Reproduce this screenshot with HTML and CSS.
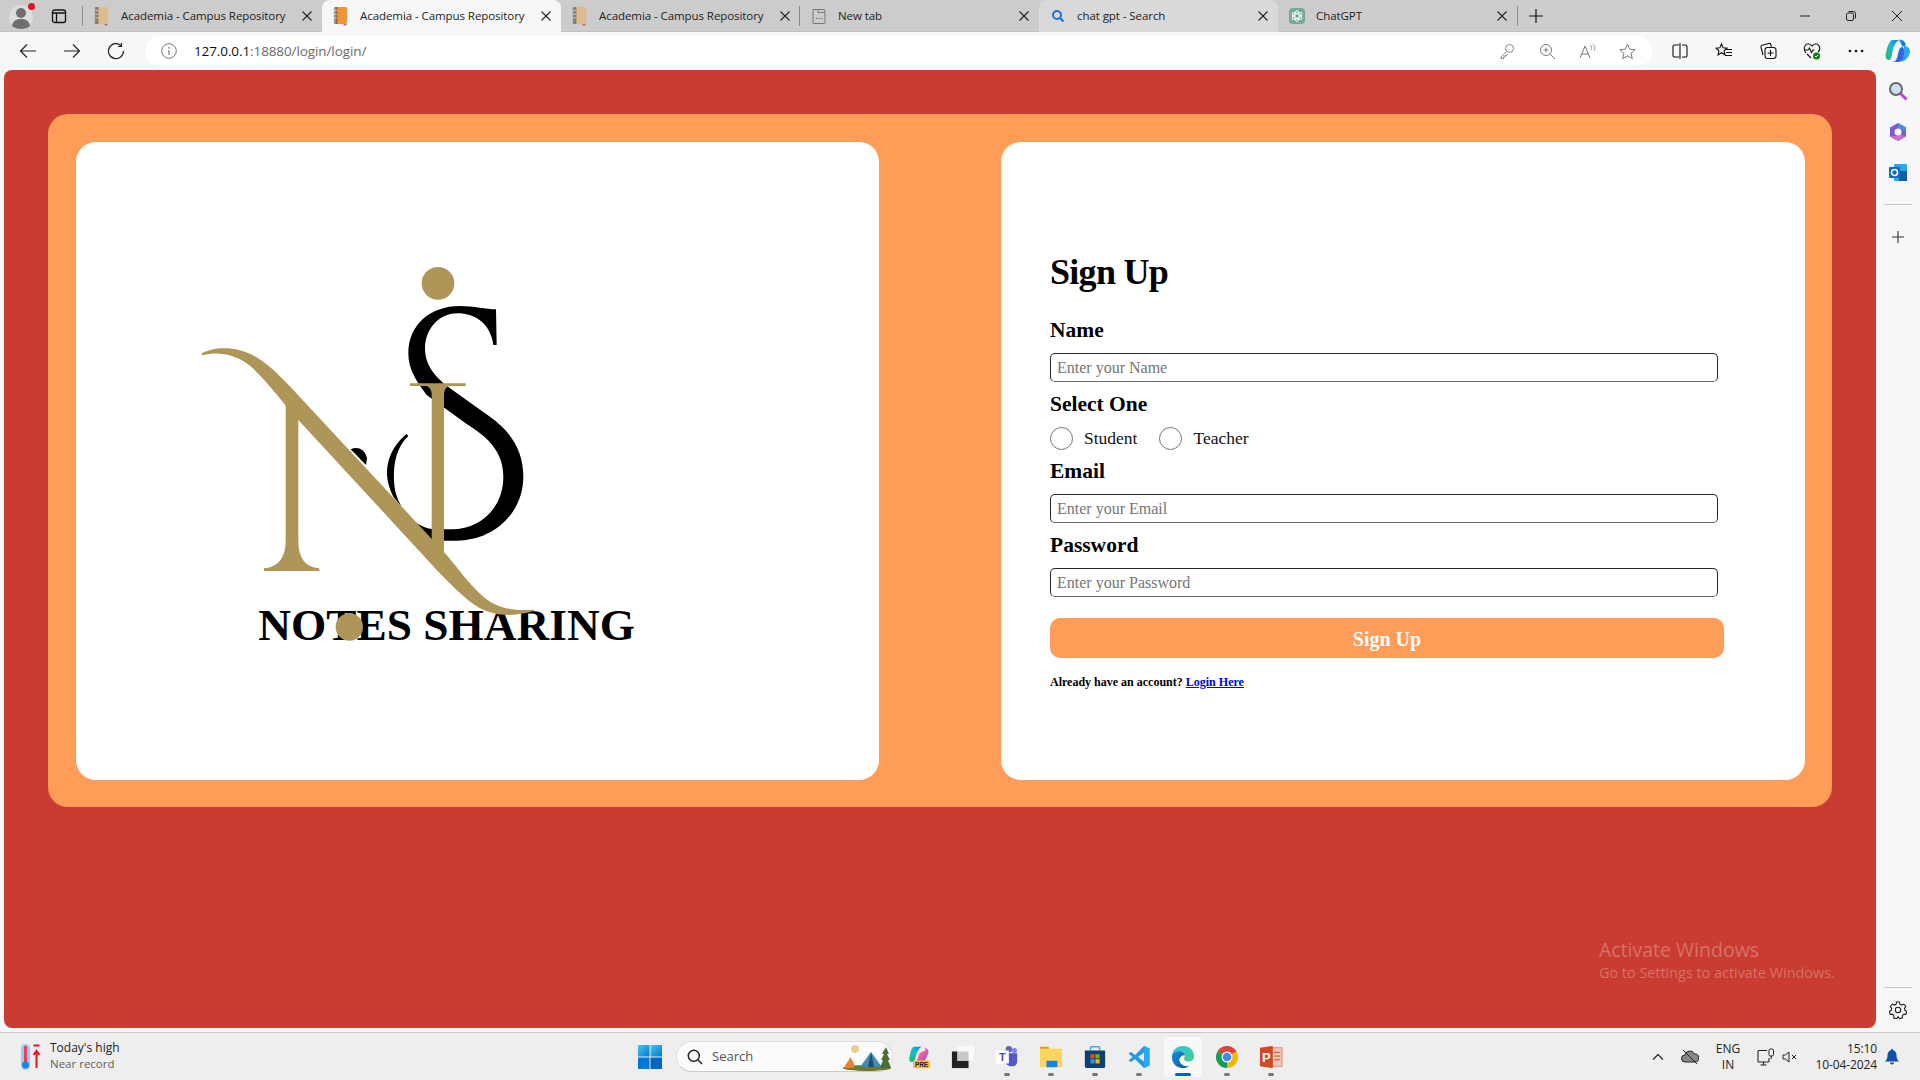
FILE: index.html
```html
<!DOCTYPE html>
<html lang="en">
<head>
<meta charset="utf-8">
<title>Academia - Campus Repository</title>
<link rel="stylesheet" href="styles.css">
</head>
<body>
<svg class="defs" width="0" height="0" aria-hidden="true">
  <defs>
    <symbol id="book" viewBox="0 0 20 22">
      <path d="M4 1h11a2 2 0 0 1 2 2v15a2 2 0 0 1-2 2H4z" fill="currentColor"/>
      <path d="M3 1h3v19H3a1 1 0 0 1-1-1V2a1 1 0 0 1 1-1z" fill="#000" opacity=".35"/>
      <path d="M2.500 5h3M2.500 9h3M2.500 13h3" stroke="#fff" stroke-width="1" opacity=".7"/>
      <path d="M13 20v2l1.500-1 1.500 1v-2z" fill="#b0452a" opacity=".8"/>
    </symbol>
    <symbol id="close" viewBox="0 0 16 16">
      <path d="M3.500 3.500l9 9M12.500 3.500l-9 9" stroke="#222" stroke-width="1.100" fill="none"/>
    </symbol>
    <linearGradient id="cop1" x1="0" y1="0" x2="1" y2="1">
      <stop offset="0" stop-color="#1fc2e8"/><stop offset=".55" stop-color="#1a73e0"/><stop offset="1" stop-color="#7a3ee0"/>
    </linearGradient>
    <linearGradient id="cop2" x1="0" y1="1" x2="1" y2="0">
      <stop offset="0" stop-color="#2bb673"/><stop offset=".6" stop-color="#19b8d8"/><stop offset="1" stop-color="#1a73e0"/>
    </linearGradient>
    <linearGradient id="cop3" x1="0" y1="0" x2="1" y2="1">
      <stop offset="0" stop-color="#f4b942"/><stop offset=".5" stop-color="#e85db0"/><stop offset="1" stop-color="#8a4fe0"/>
    </linearGradient>
    <linearGradient id="edge1" x1="0" y1="0" x2="1" y2="1">
      <stop offset="0" stop-color="#33c0e8"/><stop offset="1" stop-color="#46d08a"/>
    </linearGradient>
    <linearGradient id="edge2" x1="0" y1="0" x2="1" y2="1">
      <stop offset="0" stop-color="#1a8fe0"/><stop offset="1" stop-color="#0b4f9e"/>
    </linearGradient>
    <linearGradient id="winl" x1="0" y1="0" x2="1" y2="1">
      <stop offset="0" stop-color="#4cc4f5"/><stop offset="1" stop-color="#0078d4"/>
    </linearGradient>
  </defs>
</svg>

<header class="tabstrip">
  <div class="strip-start">
    <span class="strip-profile">
      <svg width="30" height="30" viewBox="0 0 30 30"><circle cx="14" cy="16" r="12" fill="#dcdcdc"/><circle cx="14" cy="12" r="5" fill="#6e6e6e"/><path d="M5 25c1-6 5-7 9-7s8 1 9 7c-2 2-6 3-9 3s-7-1-9-3z" fill="#6e6e6e"/><circle cx="24.500" cy="5.500" r="3.500" fill="#e81123"/></svg>
    </span>
    <span class="strip-panes">
      <svg width="16" height="16" viewBox="0 0 16 16"><rect x="1.500" y="2" width="13" height="12.500" rx="2" fill="none" stroke="#111" stroke-width="1.300"/><path d="M1.500 5h13M5.500 5v9.500" stroke="#111" stroke-width="1.300"/></svg>
    </span>
    <span class="strip-sep"></span>
  </div>
  <div class="tab"><svg class="tab-fav fav-faded" width="18" height="20"><use href="#book"/></svg><span class="tab-title">Academia - Campus Repository</span><svg class="tab-x" width="16" height="16"><use href="#close"/></svg></div>
  <div class="tab tab-active"><svg class="tab-fav fav-strong" width="18" height="20"><use href="#book"/></svg><span class="tab-title">Academia - Campus Repository</span><svg class="tab-x" width="16" height="16"><use href="#close"/></svg></div>
  <div class="tab tab-divided"><svg class="tab-fav fav-faded" width="18" height="20"><use href="#book"/></svg><span class="tab-title">Academia - Campus Repository</span><svg class="tab-x" width="16" height="16"><use href="#close"/></svg></div>
  <div class="tab tab-divided"><svg class="tab-fav" width="18" height="20" viewBox="0 0 18 20"><path d="M3 3.500h5v3h7v10a1 1 0 0 1-1 1H4a1 1 0 0 1-1-1zM8 3.500h6a1 1 0 0 1 1 1v2" fill="none" stroke="#777" stroke-width="1"/><path d="M5.800 12.500h1.200M8.400 12.500h1.200M11 12.500h1.200" stroke="#666" stroke-width="1.200"/></svg><span class="tab-title">New tab</span><svg class="tab-x" width="16" height="16"><use href="#close"/></svg></div>
  <div class="tab tab-hover"><svg class="tab-fav" width="18" height="20" viewBox="0 0 18 20"><circle cx="8" cy="9" r="4" fill="none" stroke="#1a73d8" stroke-width="2"/><path d="M11 12l3.500 3.500" stroke="#1a73d8" stroke-width="2.200"/></svg><span class="tab-title">chat gpt - Search</span><svg class="tab-x" width="16" height="16"><use href="#close"/></svg></div>
  <div class="tab"><svg class="tab-fav" width="18" height="20" viewBox="0 0 18 20"><rect x="1" y="2" width="16" height="16" rx="4" fill="#74aa9c"/><g fill="none" stroke="#fff" stroke-width=".9"><ellipse cx="9" cy="10" rx="2.300" ry="5.500"/><ellipse cx="9" cy="10" rx="2.300" ry="5.500" transform="rotate(60 9 10)"/><ellipse cx="9" cy="10" rx="2.300" ry="5.500" transform="rotate(120 9 10)"/></g></svg><span class="tab-title">ChatGPT</span><svg class="tab-x" width="16" height="16"><use href="#close"/></svg></div>
  <span class="strip-sep"></span>
  <span class="strip-new"><svg width="16" height="16" viewBox="0 0 16 16"><path d="M8 1v14M1 8h14" stroke="#111" stroke-width="1.200"/></svg></span>
  <div class="win-controls">
    <span class="win-btn"><svg width="12" height="12" viewBox="0 0 12 12"><path d="M1 6h10" stroke="#222" stroke-width="1"/></svg></span>
    <span class="win-btn"><svg width="12" height="12" viewBox="0 0 12 12"><rect x="1.500" y="3" width="7" height="7.500" rx="1.500" fill="none" stroke="#222"/><path d="M3.500 1.500h5a2 2 0 0 1 2 2v5" fill="none" stroke="#222"/></svg></span>
    <span class="win-btn"><svg width="12" height="12" viewBox="0 0 12 12"><path d="M1 1l10 10M11 1L1 11" stroke="#222" stroke-width="1"/></svg></span>
  </div>
</header>

<nav class="toolbar">
  <span class="tool"><svg width="18" height="18" viewBox="0 0 18 18"><path d="M17 9H1.500M8 2.500L1.500 9 8 15.500" fill="none" stroke="#222" stroke-width="1.200"/></svg></span>
  <span class="tool"><svg width="18" height="18" viewBox="0 0 18 18"><path d="M1 9h15.500M10 2.500L16.500 9 10 15.500" fill="none" stroke="#222" stroke-width="1.200"/></svg></span>
  <span class="tool"><svg width="18" height="18" viewBox="0 0 18 18"><path d="M14 3.500A7.500 7.500 0 1 0 16.500 9" fill="none" stroke="#222" stroke-width="1.200"/><path d="M14.500 1v3.500H11" fill="none" stroke="#222" stroke-width="1.200"/></svg></span>
  <div class="addressbar">
    <svg width="16" height="16" viewBox="0 0 16 16"><circle cx="8" cy="8" r="7.300" fill="none" stroke="#777"/><path d="M8 7v5" stroke="#777" stroke-width="1.200"/><circle cx="8" cy="4.800" r=".9" fill="#777"/></svg>
    <span class="url"><span class="url-host">127.0.0.1</span>:18880/login/login/</span>
    <span class="addr-tools">
      <span class="addr-tool"><svg width="16" height="16" viewBox="0 0 16 16"><circle cx="10.500" cy="5.500" r="4" fill="none" stroke="#888"/><path d="M7.500 8.500L2 14v1.500h2.500V14H6v-1.500h1.500l1-1.500" fill="none" stroke="#888"/></svg></span>
      <span class="addr-tool"><svg width="17" height="17" viewBox="0 0 17 17"><circle cx="7" cy="7" r="5.500" fill="none" stroke="#777"/><path d="M11 11l5 5M7 4.500v5M4.500 7h5" stroke="#777"/></svg></span>
      <span class="addr-tool"><svg width="17" height="17" viewBox="0 0 17 17"><path d="M1 15L6 3l5 12M3 11h6" fill="none" stroke="#777"/><path d="M11 2c2 1 2 3 1 5M13.500 1c3 1.500 3 4.500 1.500 7" fill="none" stroke="#999"/></svg></span>
      <span class="addr-tool"><svg width="17" height="17" viewBox="0 0 17 17"><path d="M8.500 1.200l2.200 5 5.400.5-4.100 3.600 1.300 5.300-4.800-2.800-4.800 2.800 1.300-5.300L.9 6.700l5.400-.5z" fill="none" stroke="#777"/></svg></span>
    </span>
  </div>
  <div class="tool-group">
    <span class="tool"><svg width="16" height="16" viewBox="0 0 16 16"><path d="M7 2H2.500a1.500 1.500 0 0 0-1.500 1.500v9A1.500 1.500 0 0 0 2.500 14H7M10 2h3.500A1.500 1.500 0 0 1 15 3.500v9a1.500 1.500 0 0 1-1.500 1.500H10M8 0v16" fill="none" stroke="#111" stroke-width="1.100"/></svg></span>
    <span class="tool"><svg width="18" height="18" viewBox="0 0 18 18"><path d="M6.500 2l1.600 3.700 4 .4-3 2.700.9 4L6.500 10.700 3 12.800l.9-4-3-2.700 4-.4z" fill="none" stroke="#111" stroke-width="1.100"/><path d="M11 7.500h6M11 10.500h6M10 13.500h7" stroke="#111" stroke-width="1.100"/></svg></span>
    <span class="tool"><svg width="18" height="18" viewBox="0 0 18 18"><rect x="6" y="5.500" width="11" height="11" rx="2.500" fill="none" stroke="#111" stroke-width="1.100"/><path d="M11.500 8v6M8.500 11h6M4 13l-2-8a1.500 1.500 0 0 1 1-1.800l7-1.700a1.500 1.500 0 0 1 1.800 1l.5 2.500" fill="none" stroke="#111" stroke-width="1.100"/></svg></span>
    <span class="tool"><svg width="18" height="18" viewBox="0 0 18 18"><path d="M3 11C-1 6 3 1 6 2c1.500.3 2.500 1.500 3 2 .5-.5 1.500-1.700 3-2 3-1 7 4 3 8" fill="none" stroke="#111" stroke-width="1.100"/><path d="M1 8h4l1.500-2 2 4.500 1.500-2.500h1.500M4 12l4 4" fill="none" stroke="#111" stroke-width="1.100"/><circle cx="13.500" cy="14" r="3.500" fill="#107c10"/><path d="M12 14l1 1 2-2" fill="none" stroke="#fff"/></svg></span>
    <span class="tool"><svg width="16" height="4" viewBox="0 0 16 4"><circle cx="2" cy="2" r="1.300" fill="#111"/><circle cx="8" cy="2" r="1.300" fill="#111"/><circle cx="14" cy="2" r="1.300" fill="#111"/></svg></span>
    <span class="tool tool-copilot"><svg width="26" height="24" viewBox="0 0 26 24"><path d="M8 1h6c-4 2-6 8-7 14-.5 3-1 6-3 6-3 0-4-3-3-7C2 9 4 1 8 1z" fill="url(#cop2)"/><path d="M14 1c4-1 6 2 7 5l-6 3c-2 3-2 9-4 12-1 2-3 2-6 2h8c5 0 7-6 8-9z" fill="url(#cop1)"/><path d="M19 7c3 0 6 2 6 5s-3 10-9 11c3-3 3-10 3-16z" fill="#28a8ea"/></svg></span>
  </div>
</nav>

<div class="workspace">
  <main class="page">
    <section class="card">
      <div class="panel panel-logo">
        <svg class="logo" width="480" height="410" viewBox="0 0 1440 1230" role="img" aria-label="Notes Sharing logo">
          <text class="logo-text" x="235" y="1169" textLength="1130" lengthAdjust="spacingAndGlyphs">NOTES SHARING</text>
          <g fill="#000">
            <path d="M948 178L950 285L940 285C935 240 905 195 840 190C775 186 735 240 735 295C735 350 770 385 810 415L930 500C1000 550 1030 610 1030 680C1030 790 940 872 830 872L780 872L780 838L815 838C905 838 970 770 970 680C970 610 930 565 860 522L740 435C710 395 685 360 685 310C685 225 750 168 840 168C880 168 920 178 948 178Z"/>
            <path d="M685 558C650 590 640 640 642 690C643 720 650 745 665 770L640 740C625 710 618 680 622 650C628 610 650 575 680 552Z"/>
            <path d="M690 805C720 830 745 840 790 840L790 872L750 868Z"/>
            <path d="M512 598C530 588 555 595 561 625L558 645Z"/>
          </g>
          <g fill="#ae9558">
            <path d="M690 400H857V408H810C798 410 792 420 792 435V930H755V435C755 420 749 410 737 408H690Z"/>
            <path d="M317 450H355V870C355 925 375 950 418 955V963H252V955C295 950 317 925 317 870Z"/>
            <path d="M65 310C100 290 170 285 230 322C270 347 300 378 340 420L800 915C850 975 880 1020 930 1055C970 1080 1020 1082 1062 1079V1083C1000 1099 950 1102 895 1072C855 1047 815 1005 775 965L355 510C300 448 260 392 210 347C170 314 115 302 67 316Z"/>
            <circle cx="774" cy="100" r="49"/>
            <circle cx="508" cy="1131" r="41"/>
          </g>
        </svg>
      </div>
      <div class="panel panel-form">
        <form class="signup">
          <h1 class="signup-title">Sign Up</h1>
          <label class="field-label field-first" for="name">Name</label>
          <input class="field-input" id="name" type="text" placeholder="Enter your Name">
          <div class="field-label">Select One</div>
          <div class="radio-row">
            <label class="radio-item"><input class="radio" type="radio" name="role">Student</label>
            <label class="radio-item"><input class="radio" type="radio" name="role">Teacher</label>
          </div>
          <label class="field-label field-tight" for="email">Email</label>
          <input class="field-input" id="email" type="email" placeholder="Enter your Email">
          <label class="field-label" for="password">Password</label>
          <input class="field-input" id="password" type="password" placeholder="Enter your Password">
          <button class="submit" type="button">Sign Up</button>
          <p class="signup-note">Already have an account? <a href="#">Login Here</a></p>
        </form>
      </div>
    </section>
    <div class="watermark">
      <div class="wm-title">Activate Windows</div>
      <div class="wm-sub">Go to Settings to activate Windows.</div>
    </div>
  </main>
  <aside class="sidebar">
    <span class="side-icon"><svg width="20" height="20" viewBox="0 0 20 20"><circle cx="8" cy="8" r="6" fill="#cfe0ee" stroke="#666" stroke-width="2"/><path d="M12.500 12.500l6 6" stroke="#c23fe0" stroke-width="3"/></svg></span>
    <span class="side-icon"><svg width="20" height="20" viewBox="0 0 20 20"><path d="M10 1l8 4.500v9L10 19l-8-4.500v-9z" fill="#7a5bd0"/><path d="M10 1l8 4.500v4L10 6z" fill="#4a90e0"/><path d="M2 14.500l8 4.500 8-4.500-5-2-3 1z" fill="#c86fd0"/><circle cx="10" cy="10" r="3.500" fill="#f7f7f7"/></svg></span>
    <span class="side-icon"><svg width="20" height="20" viewBox="0 0 20 20"><rect x="6" y="1" width="13" height="17" rx="1" fill="#28a8ea"/><rect x="11" y="8" width="8" height="10" fill="#0a5ea8"/><rect x="1" y="4" width="11" height="11" rx="1" fill="#0f6cbd"/><circle cx="6.500" cy="9.500" r="3" fill="none" stroke="#fff" stroke-width="1.500"/></svg></span>
    <span class="side-rule"></span>
    <span class="side-icon side-plus"><svg width="14" height="14" viewBox="0 0 14 14"><path d="M7 1v12M1 7h12" stroke="#333" stroke-width="1.100"/></svg></span>
    <span class="side-rule side-rule-low"></span>
    <span class="side-icon side-gear"><svg width="18" height="18" viewBox="0 0 18 18"><path d="M7.500 1h3l.5 2.300 1.700.8 2.100-1 2 2.400-1.300 1.900.4 1.900 1.900 1.200-.9 2.900-2.300-.1-1.300 1.400.1 2.200-2.900.9-1.200-1.900H8.900l-1.300 1.900-2.900-.9.200-2.300-1.300-1.300-2.300.1-.9-2.900 1.900-1.200.4-1.900L1.400 5.500l2-2.400 2.100 1L7.100 3.300z" fill="none" stroke="#222" stroke-width="1.100"/><circle cx="9" cy="9" r="2.700" fill="none" stroke="#222" stroke-width="1.100"/></svg></span>
  </aside>
</div>

<footer class="taskbar">
  <div class="tb-weather">
    <svg width="24" height="30" viewBox="0 0 24 30"><rect x="3" y="2" width="9" height="26" rx="4.500" fill="#9cc9f2"/><rect x="6" y="4" width="3" height="16" fill="#e0455f"/><circle cx="7.500" cy="23" r="3.500" fill="#1a86d8"/><path d="M15.500 3.500h6" stroke="#e81123" stroke-width="2"/><path d="M18.500 26V10M15.500 13l3-4 3 4" fill="none" stroke="#e81123" stroke-width="2"/></svg>
    <div class="weather-text">
      <div class="weather-main">Today's high</div>
      <div class="weather-sub">Near record</div>
    </div>
  </div>
  <span class="tb-start"><svg width="24" height="24" viewBox="0 0 24 24"><rect x="0" y="0" width="11.500" height="11.500" fill="url(#winl)"/><rect x="12.500" y="0" width="11.500" height="11.500" fill="url(#winl)"/><rect x="0" y="12.500" width="11.500" height="11.500" fill="#0078d4"/><rect x="12.500" y="12.500" width="11.500" height="11.500" fill="#0067c0"/></svg></span>
  <div class="tb-search">
    <svg width="16" height="16" viewBox="0 0 16 16"><circle cx="6.800" cy="6.800" r="5.500" fill="none" stroke="#222" stroke-width="1.500"/><path d="M10.800 10.800L15 15" stroke="#222" stroke-width="1.500"/></svg>
    <span class="tb-search-text">Search</span>
    <svg class="tb-camp" width="50" height="28" viewBox="0 0 50 28"><ellipse cx="25" cy="25" rx="24" ry="3" fill="#6d7a2e"/><path d="M18 24l11-15 11 15z" fill="#3f8cb5"/><path d="M29 9l-3 15h6z" fill="#1f4f6d"/><circle cx="13" cy="6" r="4" fill="#eecb9a"/><path d="M3 25c0-5 4-6 5-11 2 3 5 6 4 11z" fill="#ee7f2a"/><path d="M44 4l-4 7h2l-3 6h2l-3 8h11l-3-8h2l-3-6h2z" fill="#4f6b35"/></svg>
  </div>
  <span class="tb-slot"><svg width="26" height="28" viewBox="0 0 26 28"><path d="M7 2h9c-4 2-6 8-7 13-.5 3-2 5-4 5-3 0-4-3-3-6C3 9 4 3 7 2z" fill="url(#cop2)"/><path d="M14 2c3-1 6 1 7 4l-7 3c-2 3-2 8-5 11h9c3-3 5-8 6-11 1-4-4-7-10-7z" fill="url(#cop3)"/><rect x="6" y="18" width="20" height="9" rx="2" fill="#fbbf17"/><text class="pre-text" x="16" y="25.500" text-anchor="middle">PRE</text></svg></span>
  <span class="tb-slot"><svg width="26" height="26" viewBox="0 0 26 26"><rect x="1" y="7" width="18" height="18" fill="#222"/><rect x="7" y="1" width="18" height="16" fill="#fafafa"/><rect x="7" y="7" width="12" height="10" fill="#c8c8c8"/></svg></span>
  <span class="tb-slot"><svg width="26" height="26" viewBox="0 0 26 26"><circle cx="21" cy="6" r="2.800" fill="#7b83eb"/><circle cx="15" cy="4.500" r="3.500" fill="#6264a7"/><path d="M11 9h13v9a5 5 0 0 1-5 5h-2a6 6 0 0 1-6-6z" fill="#5059c9"/><rect x="1" y="6" width="14" height="14" fill="#fff"/><text class="teams-text" x="8" y="17.500" text-anchor="middle">T</text></svg><span class="run-dot"></span></span>
  <span class="tb-slot"><svg width="26" height="26" viewBox="0 0 26 26"><path d="M1 3a1 1 0 0 1 1-1h8l2 2.500H1z" fill="#d9a21e"/><rect x="1" y="4" width="24" height="20" rx="1" fill="#fdd55f"/><rect x="8" y="17" width="12" height="7" rx="1" fill="#1a86d8"/></svg><span class="run-dot"></span></span>
  <span class="tb-slot"><svg width="24" height="26" viewBox="0 0 24 26"><path d="M7 6V3a1 1 0 0 1 1-1h8a1 1 0 0 1 1 1v3" fill="none" stroke="#28b8e8" stroke-width="1.600"/><path d="M1 6h22v17a2 2 0 0 1-2 2H3a2 2 0 0 1-2-2z" fill="#0f3f73"/><rect x="7" y="10" width="4.500" height="4.500" fill="#e8491d"/><rect x="12.500" y="10" width="4.500" height="4.500" fill="#7ab800"/><rect x="7" y="15.500" width="4.500" height="4.500" fill="#1a9cf0"/><rect x="12.500" y="15.500" width="4.500" height="4.500" fill="#fdb900"/></svg><span class="run-dot"></span></span>
  <span class="tb-slot"><svg width="26" height="26" viewBox="0 0 24 24"><path d="M17 1L8 10 4 7 1.500 8.500 5.500 12l-4 3.500L4 17l4-3 9 9 5.500-2.500v-17zM17 7.500v9L11 12z" fill="#1f9be8" fill-rule="evenodd"/><path d="M17 1l5.500 2.500v17L17 23z" fill="#29aaf0"/></svg><span class="run-dot"></span></span>
  <span class="tb-slot tb-slot-active"><svg width="26" height="26" viewBox="0 0 26 26"><path d="M1 13C1 6 6 1 13 1c7 0 12 5 12 11 0 4-3 6-6 6-3 0-5-1-5-3 0-1 1-1.500 1-3 0-2-3-4-6-4C5 8 1 10 1 13z" fill="url(#edge1)"/><path d="M1 13c0-4 4-6 8-6 3 0 6 2 6 4-3 0-6 2-6 5 0 4 4 7 8 7 1 0 2 0 3-.5C18 24 15 25 13 25 6 25 1 20 1 13z" fill="url(#edge2)"/></svg><span class="run-bar"></span></span>
  <span class="tb-slot"><svg width="26" height="26" viewBox="0 0 24 24"><path d="M12 12L2.470 6.500A11 11 0 0 1 21.530 6.500Z" fill="#db4437"/><path d="M12 12L21.530 6.500A11 11 0 0 1 12 23Z" fill="#f4b400"/><path d="M12 12L12 23A11 11 0 0 1 2.470 6.500Z" fill="#0f9d58"/><circle cx="12" cy="12" r="5.500" fill="#fff"/><circle cx="12" cy="12" r="4.300" fill="#4285f4"/></svg><span class="run-dot"></span></span>
  <span class="tb-slot"><svg width="26" height="26" viewBox="0 0 26 26"><rect x="13" y="3" width="12" height="20" fill="#f0c8b8" stroke="#d88a70"/><path d="M16 8h7M16 12h7M16 16h7" stroke="#d24726"/><path d="M1 3l14-2v24L1 23z" fill="#d24726"/><text class="ppt-text" x="8" y="18" text-anchor="middle">P</text></svg><span class="run-dot"></span></span>
  <div class="tray">
    <svg class="tray-chev" width="12" height="8" viewBox="0 0 12 8"><path d="M1 6.500L6 1.500l5 5" fill="none" stroke="#222" stroke-width="1.200"/></svg>
    <svg class="tray-cloud" width="18" height="16" viewBox="0 0 18 16"><path d="M4 13a3.500 3.500 0 0 1 0-7 5 5 0 0 1 9.500-1A4 4 0 0 1 14 13z" fill="#888" stroke="#222"/><path d="M2 1l14 14" stroke="#222"/></svg>
    <div class="tray-lang"><div>ENG</div><div>IN</div></div>
    <svg class="tray-net" width="18" height="18" viewBox="0 0 18 18"><path d="M10 2.500H2a1 1 0 0 0-1 1V13a1 1 0 0 0 1 1h9a1 1 0 0 0 1-1v-3M6.500 14v3M3.500 17h6" fill="none" stroke="#222" stroke-width="1.100"/><rect x="12" y="1" width="4.500" height="7" rx="1.500" fill="none" stroke="#222"/><path d="M14.200 8v3" stroke="#222"/></svg>
    <svg class="tray-vol" width="16" height="14" viewBox="0 0 16 14"><path d="M1 5v4h2.500L7 12V2L3.500 5z" fill="none" stroke="#222"/><path d="M10 5l4 4M14 5l-4 4" stroke="#222"/></svg>
    <div class="tray-clock"><div>15:10</div><div>10-04-2024</div></div>
    <svg class="tray-bell" width="14" height="16" viewBox="0 0 14 16"><path d="M7 0a1.200 1.200 0 0 1 1.200 1.200C10.500 2 11.500 4 11.500 6.500c0 3 1 4.500 2.500 6H0c1.500-1.500 2.500-3 2.500-6C2.500 4 3.500 2 5.800 1.200A1.200 1.200 0 0 1 7 0z" fill="#0f4fa8"/><path d="M5 13.500h4a2 2 0 0 1-4 0z" fill="#0f4fa8"/></svg>
  </div>
</footer>
</body>
</html>
```

FILE: styles.css
```css
* { box-sizing: border-box; }
html, body { margin: 0; padding: 0; }
body {
  width: 1920px;
  height: 1080px;
  overflow: hidden;
  display: flex;
  flex-direction: column;
  background: #f7f7f7;
  font-family: "Open Sans", "Noto Sans", sans-serif;
  color: #222;
}
.defs { position: absolute; }
svg { display: block; flex: none; }

/* tab strip */
.tabstrip {
  height: 32px;
  flex: none;
  display: flex;
  align-items: stretch;
  background: #cccccc;
  box-shadow: inset 0 -1px 0 #c0c0c0;
}
.strip-start { width: 83px; flex: none; display: flex; align-items: center; }
.strip-profile { width: 44px; display: flex; justify-content: center; }
.strip-panes { width: 30px; display: flex; justify-content: center; }
.strip-sep { width: 1px; height: 20px; background: #8a8a8a; align-self: center; margin-left: 8px; }
.tab {
  width: 239px;
  flex: none;
  display: flex;
  align-items: center;
  padding-left: 10px;
  padding-right: 7px;
  font-size: 11.500px;
  color: #222;
  position: relative;
}
.tab-divided::before {
  content: "";
  position: absolute;
  left: -1px;
  top: 6px;
  height: 20px;
  width: 1px;
  background: #8a8a8a;
}
.tab-active { background: #f7f7f7; border-radius: 8px 8px 0 0; }
.tab-hover { background: #d9d9d9; border-radius: 8px 8px 0 0; }
.tab-fav { margin-right: 10px; }
.fav-faded { color: #dcbb8d; }
.fav-strong { color: #e8983c; }
.tab-title { flex: 1; white-space: nowrap; overflow: hidden; letter-spacing: -0.07px; margin-bottom: 2px; }
.tab-active + .tab-divided::before { display: none; }
.strip-new { width: 36px; display: flex; align-items: center; justify-content: center; }
.tabstrip > .strip-sep { margin-left: 0; }
.win-controls { margin-left: auto; display: flex; }
.win-btn { width: 46px; display: flex; align-items: center; justify-content: center; }

/* toolbar */
.toolbar {
  height: 38px;
  flex: none;
  display: flex;
  align-items: center;
  padding-left: 6px;
  background: #f7f7f7;
}
.tool { width: 44px; height: 30px; display: flex; align-items: center; justify-content: center; flex: none; }
.tool-copilot { margin-left: -2px; }
.addressbar {
  width: 1507px;
  height: 30px;
  flex: none;
  margin-left: 7px;
  display: flex;
  align-items: center;
  padding: 0 5px 0 16px;
  background: #fff;
  border-radius: 15px;
}
.url { margin-left: 17px; font-size: 13.500px; color: #6b6b6b; letter-spacing: -0.1px; }
.url-host { color: #111; }
.addr-tools { margin-left: auto; display: flex; }
.addr-tool { width: 40px; display: flex; justify-content: center; }
.tool-group { display: flex; margin-left: 6px; flex: none; }

/* main area */
.workspace { flex: 1; display: flex; min-height: 0; }
.page {
  position: relative;
  width: 1872px;
  height: 958px;
  margin-left: 4px;
  padding: 44px;
  background: #c93c31;
  border-radius: 8px;
}
.card {
  display: grid;
  grid-template-columns: 803px 804px;
  column-gap: 122px;
  height: 693px;
  padding: 28px 27px 27px 28px;
  background: #ff9c58;
  border-radius: 20px;
}
.panel { background: #fff; border-radius: 20px; }
.panel-logo { padding: 108px 0 0 104px; }
.logo-text {
  font-family: "Liberation Serif", serif;
  font-weight: 700;
  font-size: 132px;
  fill: #000;
}
.panel-form { padding: 110px 0 0 49px; }
.signup { display: flex; flex-direction: column; align-items: flex-start; font-family: "Liberation Serif", serif; }
.signup-title {
  margin: 0;
  font-size: 36px;
  line-height: 40px;
  font-weight: 700;
  letter-spacing: -0.7px;
  color: #000;
}
.field-label {
  display: block;
  margin-top: 10px;
  font-size: 21.500px;
  line-height: 24px;
  font-weight: 700;
  color: #000;
}
.field-first { margin-top: 26px; }
.field-tight { margin-top: 9px; }
.field-input {
  display: block;
  width: 668px;
  height: 29px;
  margin-top: 11px;
  padding: 0 6px;
  background: #fff;
  border: 1px solid #2a2a2a;
  border-bottom-color: #6b6b6b;
  border-radius: 5px;
  font-family: "Liberation Serif", serif;
  font-size: 16px;
  color: #000;
  outline: none;
}
.field-input::placeholder { color: #757575; opacity: 1; }
.radio-row { display: flex; gap: 22px; margin-top: 10px; height: 24px; align-items: center; }
.radio-item { display: flex; align-items: center; gap: 11px; font-size: 17.500px; color: #111; }
.radio {
  appearance: none;
  width: 23px;
  height: 23px;
  margin: 0;
  background: #fff;
  border: 1px solid #767676;
  border-radius: 50%;
}
.submit {
  width: 674px;
  height: 40px;
  margin-top: 21px;
  padding: 2px 0 0;
  background: #ff9c58;
  border: 0;
  border-radius: 10px;
  font-family: "Liberation Serif", serif;
  font-size: 20px;
  font-weight: 700;
  color: #fff;
}
.signup-note {
  margin: 16px 0 0;
  font-size: 12px;
  line-height: 16px;
  font-weight: 700;
  color: #000;
}
.signup-note a { color: #0000ee; text-decoration: underline; }
.watermark { position: absolute; left: 1595px; top: 867px; color: rgba(255, 255, 255, 0.28); font-family: "Open Sans", sans-serif; white-space: nowrap; }
.wm-title { font-size: 19.500px; line-height: 26px; }
.wm-sub { font-size: 14.400px; line-height: 20px; }

/* sidebar */
.sidebar { width: 44px; flex: none; display: flex; flex-direction: column; align-items: center; }
.side-icon { width: 44px; height: 41px; display: flex; align-items: center; justify-content: center; flex: none; }
.side-rule { width: 28px; height: 1px; background: #c4c4c4; margin-top: 11px; flex: none; }
.side-plus { margin-top: 11px; }
.side-rule-low { margin-top: auto; margin-bottom: 1px; }
.side-gear { margin-bottom: -2px; }

/* taskbar */
.taskbar {
  height: 48px;
  flex: none;
  margin-top: 4px;
  display: flex;
  align-items: center;
  background: #eeeeee;
  border-top: 1px solid #c8c8c8;
}
.tb-weather { width: 630px; flex: none; display: flex; align-items: center; padding-left: 18px; gap: 8px; }
.weather-text { margin-bottom: 1px; }
.weather-main { font-size: 12px; line-height: 16px; color: #222; }
.weather-sub { font-size: 11.500px; line-height: 16px; color: #5f5f5f; }
.tb-start { width: 40px; display: flex; justify-content: center; flex: none; }
.tb-search {
  width: 217px;
  height: 31px;
  margin: 0 4px 0 6px;
  display: flex;
  align-items: center;
  padding-left: 10px;
  background: #fbfbfb;
  border: 1px solid #dedede;
  border-bottom-color: #c9c9c9;
  border-radius: 16px;
  flex: none;
}
.tb-search-text { margin-left: 9px; margin-bottom: 2px; font-size: 13px; color: #555; }
.tb-camp { margin-left: auto; }
.tb-slot { position: relative; width: 44px; height: 40px; display: flex; align-items: center; justify-content: center; flex: none; }
.tb-slot svg { width: 24px; height: 24px; }
.tb-slot-active { background: #f8f8f8; border-radius: 4px; margin: 0 3px; width: 38px; }
.run-dot { position: absolute; bottom: 1px; left: 19px; width: 6px; height: 3px; border-radius: 2px; background: #777; }
.run-bar { position: absolute; bottom: 1px; left: 11px; width: 16px; height: 3px; border-radius: 2px; background: #0067c0; }
.pre-text { font-family: "Liberation Sans", sans-serif; font-size: 7.500px; font-weight: 700; fill: #222; }
.teams-text { font-family: "Liberation Sans", sans-serif; font-size: 12px; font-weight: 700; fill: #464eb8; }
.ppt-text { font-family: "Liberation Sans", sans-serif; font-size: 14px; font-weight: 700; fill: #fff; }
.tray { margin-left: auto; display: flex; align-items: center; color: #222; font-size: 12px; width: 268px; }
.tray-cloud { margin-left: 17px; }
.tray-lang { width: 40px; margin-left: 9px; text-align: center; line-height: 16px; }
.tray-net { margin-left: 9px; }
.tray-vol { margin-left: 7px; }
.tray-clock { margin-left: auto; text-align: right; line-height: 16px; letter-spacing: -0.1px; }
.tray-bell { margin: 0 21px 0 8px; }
```
